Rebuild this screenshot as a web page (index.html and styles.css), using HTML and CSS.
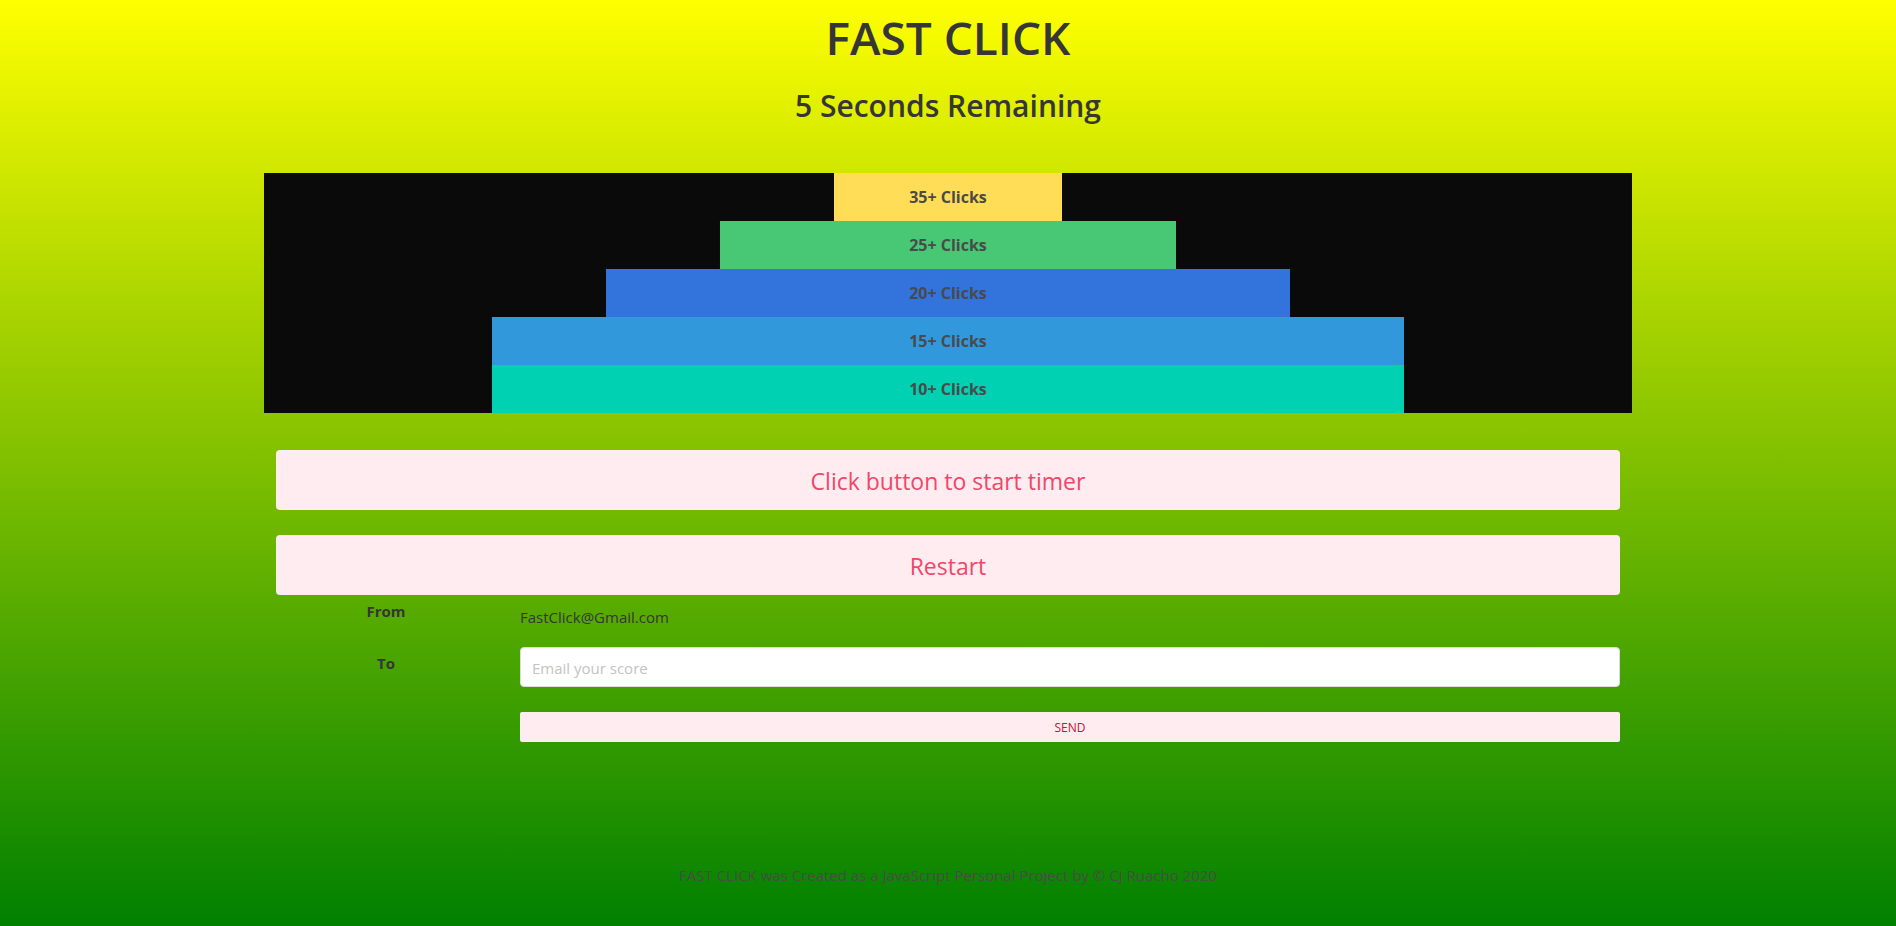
FILE: index.html
```html
<!DOCTYPE html>
<html lang="en">
<head>
<meta charset="utf-8">
<title>Fast Click</title>
<link rel="stylesheet" href="styles.css">
</head>
<body>
<header class="heading">
  <h1 class="title">FAST CLICK</h1>
  <h2 class="timer">5 Seconds Remaining</h2>
</header>
<main class="container">
  <section class="pyramid">
    <div class="level level-35">35+ Clicks</div>
    <div class="level level-25">25+ Clicks</div>
    <div class="level level-20">20+ Clicks</div>
    <div class="level level-15">15+ Clicks</div>
    <div class="level level-10">10+ Clicks</div>
  </section>
  <div class="actions">
    <button class="button" type="button">Click button to start timer</button>
    <button class="button" type="button">Restart</button>
  </div>
  <form class="form">
    <span class="label">From</span>
    <p class="sender">FastClick@Gmail.com</p>
    <label class="label" for="email">To</label>
    <input class="input" id="email" type="email" placeholder="Email your score">
    <button class="send" type="button">SEND</button>
  </form>
</main>
<footer class="footer">FAST CLICK was Created as a JavaScript Personal Project by © CJ Ruacho 2020</footer>
</body>
</html>
```
FILE: styles.css
```css
* {
  box-sizing: border-box;
}

html {
  min-height: 100%;
  background: linear-gradient(yellow, green);
}

body {
  margin: 0;
  font: 15px/24px "Open Sans", "Noto Sans", sans-serif;
  color: #363636;
}

button,
input {
  font-family: inherit;
}

.heading {
  padding: 10px 12px 0;
  text-align: center;
}

.title {
  margin: 0 0 24px;
  font-size: 46px;
  line-height: 54px;
  font-weight: 600;
}

.timer {
  margin: 0;
  font-size: 30px;
  line-height: 36px;
  font-weight: 600;
}

.container {
  max-width: 1368px;
  margin: 49px auto 0;
}

.pyramid {
  display: flex;
  flex-direction: column;
  align-items: center;
  background: #0a0a0a;
}

.level {
  padding: 12px;
  font-size: 16px;
  font-weight: 700;
  text-align: center;
  color: #4a4a4a;
}

.level-35 {
  width: 16.6667%;
  background: #ffdd57;
}

.level-25 {
  width: 33.3333%;
  background: #48c774;
}

.level-20 {
  width: 50%;
  background: #3273dc;
}

.level-15 {
  width: 66.6667%;
  background: #3298dc;
}

.level-10 {
  width: 66.6667%;
  background: #00d1b2;
}

.actions {
  display: grid;
  gap: 25px;
  padding: 37px 12px 0;
}

.button {
  height: 60px;
  padding: 2px 12px 0;
  border: 0;
  border-radius: 4px;
  background: #feecf0;
  color: #f14668;
  font-size: 23px;
  cursor: pointer;
}

.form {
  display: grid;
  grid-template-columns: 1fr 5fr;
  column-gap: 24px;
  padding: 0 12px;
}

.label {
  padding-top: 4px;
  font-weight: 700;
  text-align: center;
}

.sender {
  margin: 0;
  padding: 10px 0 18px;
}

.input {
  height: 40px;
  padding: 1px 11px 0;
  border: 1px solid #dbdbdb;
  border-radius: 4px;
  background: #fff;
  box-shadow: inset 0 1px 2px rgba(10, 10, 10, 0.05);
  color: #363636;
  font-size: 15px;
}

.input::placeholder {
  color: #c3c3c3;
  opacity: 1;
}

.send {
  grid-column: 2;
  height: 30px;
  margin-top: 25px;
  border: 0;
  border-radius: 2px;
  background: #feecf0;
  color: #cc0f35;
  font-size: 12px;
  cursor: pointer;
}

.footer {
  padding: 121px 24px 39px;
  text-align: center;
  color: #4a4a4a;
}
```
